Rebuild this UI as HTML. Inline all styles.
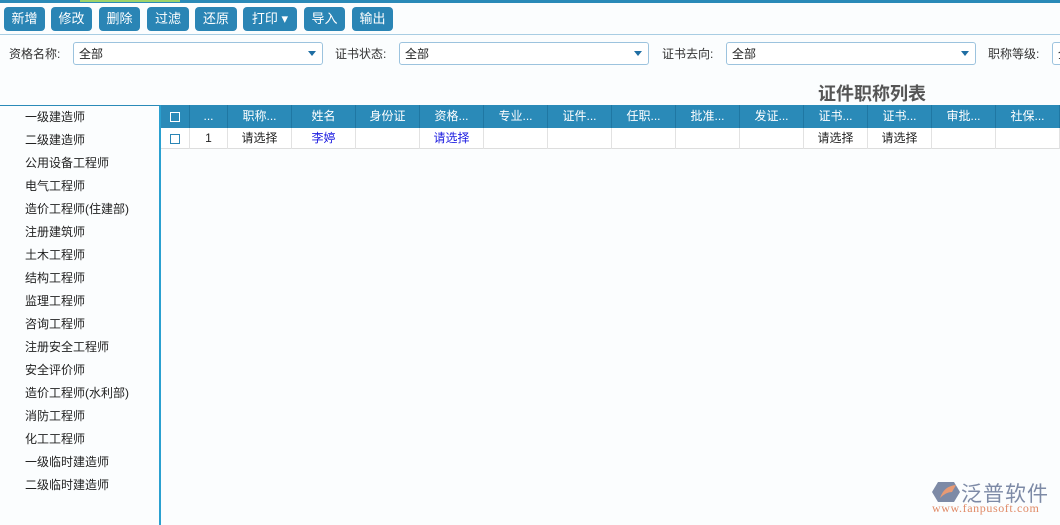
<!DOCTYPE html>
<html><head><meta charset="utf-8"><style>
*{margin:0;padding:0;box-sizing:border-box}
body{width:1060px;height:525px;overflow:hidden;background:#fbfdfe;font-family:"Liberation Sans","Noto Sans CJK SC",sans-serif;font-size:12px;color:#222;position:relative}
.top{position:absolute;left:0;top:0;width:1060px;height:3px;background:#2a8ab8}
.top i{position:absolute;left:80px;top:0;width:100px;height:2px;background:#9fd36a}
.btn{position:absolute;top:7px;height:24px;background:#2a85b5;color:#fff;border-radius:4px;font-size:13px;line-height:24px;text-align:center}
.sep{position:absolute;left:0;top:34px;width:1060px;height:1px;background:#a8cde3}
.lbl{position:absolute;top:45px;font-size:12px;color:#333}
.sel{position:absolute;top:42px;height:23px;border:1px solid #9cc3de;border-radius:3px;background:#fff;font-size:12px;line-height:21px;padding-left:5px;padding-top:1px}
.sel b{position:absolute;right:6px;top:8px;width:0;height:0;border-left:4px solid transparent;border-right:4px solid transparent;border-top:5px solid #1f6ea3}
.title{position:absolute;left:818px;top:80px;font-size:18px;font-weight:bold;color:#555}
.left{position:absolute;left:0;top:105px;width:161px;height:420px;border-top:1px solid #2a8ab8;border-right:2px solid #2aa0d0}
.left div{position:absolute;left:25px;font-size:12px;color:#222}
.hdr{position:absolute;left:161px;top:105px;width:899px;height:23px;background:#2a8ab8}
.c{position:absolute;text-align:center;font-size:12px;line-height:23px}
.hdr .c{color:#fff;border-right:1px solid #1f77a3;height:23px}
.row{position:absolute;left:161px;top:128px;width:899px;height:21px;border-bottom:1px solid #ddd;background:#fff}
.row .c{border-right:1px solid #e2e2e2;height:21px;line-height:21px}
.cb{display:inline-block;width:10px;height:10px;border:1.5px solid #fff;vertical-align:middle}
.row .cb{border-color:#2a85b5}
</style></head><body>
<div class="top"><i></i></div>
<div class="btn" style="left:4px;width:41px">新增</div>
<div class="btn" style="left:51px;width:41px">修改</div>
<div class="btn" style="left:99px;width:41px">删除</div>
<div class="btn" style="left:147px;width:42px">过滤</div>
<div class="btn" style="left:195px;width:42px">还原</div>
<div class="btn" style="left:243px;width:54px">打印 ▾</div>
<div class="btn" style="left:304px;width:41px">导入</div>
<div class="btn" style="left:352px;width:41px">输出</div>
<div class="sep"></div>
<div class="lbl" style="left:9px">资格名称:</div>
<div class="sel" style="left:73px;width:250px">全部<b></b></div>
<div class="lbl" style="left:335px">证书状态:</div>
<div class="sel" style="left:399px;width:250px">全部<b></b></div>
<div class="lbl" style="left:662px">证书去向:</div>
<div class="sel" style="left:726px;width:250px">全部<b></b></div>
<div class="lbl" style="left:988px">职称等级:</div>
<div class="sel" style="left:1052px;width:40px">全<b></b></div>
<div class="title">证件职称列表</div>
<div class="left">
<div style="top:2px">一级建造师</div><div style="top:25px">二级建造师</div><div style="top:48px">公用设备工程师</div><div style="top:71px">电气工程师</div><div style="top:94px">造价工程师(住建部)</div><div style="top:117px">注册建筑师</div><div style="top:140px">土木工程师</div><div style="top:163px">结构工程师</div><div style="top:186px">监理工程师</div><div style="top:209px">咨询工程师</div><div style="top:232px">注册安全工程师</div><div style="top:255px">安全评价师</div><div style="top:278px">造价工程师(水利部)</div><div style="top:301px">消防工程师</div><div style="top:324px">化工工程师</div><div style="top:347px">一级临时建造师</div><div style="top:370px">二级临时建造师</div>
</div>
<div class="hdr">
<div class="c" style="left:0;width:29px"><span class="cb"></span></div>
<div class="c" style="left:29px;width:38px">...</div>
<div class="c" style="left:67px;width:64px">职称...</div>
<div class="c" style="left:131px;width:64px">姓名</div>
<div class="c" style="left:195px;width:64px">身份证</div>
<div class="c" style="left:259px;width:64px">资格...</div>
<div class="c" style="left:323px;width:64px">专业...</div>
<div class="c" style="left:387px;width:64px">证件...</div>
<div class="c" style="left:451px;width:64px">任职...</div>
<div class="c" style="left:515px;width:64px">批准...</div>
<div class="c" style="left:579px;width:64px">发证...</div>
<div class="c" style="left:643px;width:64px">证书...</div>
<div class="c" style="left:707px;width:64px">证书...</div>
<div class="c" style="left:771px;width:64px">审批...</div>
<div class="c" style="left:835px;width:64px">社保...</div>
</div>
<div class="row">
<div class="c" style="left:0;width:29px"><span class="cb"></span></div>
<div class="c" style="left:29px;width:38px">1</div>
<div class="c" style="left:67px;width:64px">请选择</div>
<div class="c" style="left:131px;width:64px;color:#1a1ae0">李婷</div>
<div class="c" style="left:195px;width:64px"></div>
<div class="c" style="left:259px;width:64px;color:#1a1ae0">请选择</div>
<div class="c" style="left:323px;width:64px"></div>
<div class="c" style="left:387px;width:64px"></div>
<div class="c" style="left:451px;width:64px"></div>
<div class="c" style="left:515px;width:64px"></div>
<div class="c" style="left:579px;width:64px"></div>
<div class="c" style="left:643px;width:64px">请选择</div>
<div class="c" style="left:707px;width:64px">请选择</div>
<div class="c" style="left:771px;width:64px"></div>
<div class="c" style="left:835px;width:64px"></div>
</div>
<svg style="position:absolute;left:930px;top:480px" width="32" height="24" viewBox="0 0 32 24">
<polygon points="8,2 24,2 30,12 24,22 8,22 2,12" fill="#7d8aa6"/>
<path d="M10,18 Q14,6 26,5 L22,12 Q16,12 10,18Z" fill="#e89a74"/>
</svg>
<div style="position:absolute;left:961px;top:478px;font-size:21px;color:#7d8aa6;letter-spacing:1px;font-family:'Noto Sans CJK SC',sans-serif">泛普软件</div>
<div style="position:absolute;left:932px;top:501px;font-size:12px;letter-spacing:0.6px;color:#e08a66;font-family:'Liberation Serif',serif">www.fanpusoft.com</div>
</body></html>
